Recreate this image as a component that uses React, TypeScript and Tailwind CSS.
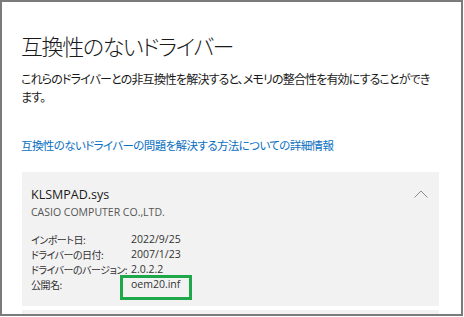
import React from 'react';

// Driver detail rows
const rows: Array<{ label: string; value: string; highlight?: boolean }> = [
  { label: 'インポート日:', value: '2022/9/25' },
  { label: 'ドライバーの日付:', value: '2007/1/23' },
  { label: 'ドライバーのバージョン:', value: '2.0.2.2' },
  { label: '公開名:', value: 'oem20.inf', highlight: true },
];

const ChevronUp = () => (
  <svg width="14" height="8" viewBox="0 0 14 8" fill="none">
    <polyline points="0.5,7.5 7,1 13.5,7.5" stroke="#8c8c8c" strokeWidth="1" />
  </svg>
);

const App: React.FC = () => {
  return (
    <div className="w-[464px] h-[317px] bg-white font-['Open_Sans','Noto_Sans_CJK_JP',sans-serif] [font-feature-settings:'palt']">
      <div className="w-[463px] h-[316px] border-2 border-[#7b7b7b] overflow-hidden pl-[19px] pr-[22px] pt-[28px]">
        <h1 className="text-[22px] leading-[30px] tracking-[-1.4px] text-[#1a1a1a] font-['Noto_Sans_CJK_JP',sans-serif] font-light">
          互換性のないドライバー
        </h1>

        <p className="mt-[10px] text-[12px] leading-[18px] tracking-[-0.85px] text-[#1a1a1a] font-['Noto_Sans_CJK_JP',sans-serif]">
          これらのドライバーとの非互換性を解決すると、メモリの整合性を有効にすることができます。
        </p>

        <a className="block mt-[30px] text-[11.5px] leading-[18px] tracking-[-0.6px] text-[#0a6fc2] font-['Noto_Sans_CJK_JP',sans-serif]">
          互換性のないドライバーの問題を解決する方法についての詳細情報
        </a>

        <div className="mt-[18px] ml-[1px] bg-[#f2f2f2] pl-[9px] pr-[11px] pt-[14px] pb-[14px]">
          <div className="flex items-start justify-between">
            <div>
              <div className="text-[12.5px] leading-[18px] text-[#1a1a1a]">KLSMPAD.sys</div>
              <div className="text-[10.5px] leading-[16px] text-[#555]">CASIO COMPUTER CO.,LTD.</div>
            </div>
            <div className="mt-[4px]">
              <ChevronUp />
            </div>
          </div>

          <div className="mt-[12px] text-[10.5px] leading-[15px] text-[#333]">
            {rows.map((r) => (
              <div key={r.label} className="flex">
                <span className="w-[100px] whitespace-nowrap text-[10px] tracking-[-0.5px] font-['Noto_Sans_CJK_JP',sans-serif]">
                  {r.label}
                </span>
                <span className="relative">
                  {r.value}
                  {r.highlight && (
                    <span className="absolute -left-[11px] -top-[2px] w-[72px] h-[25px] border-[3px] border-[#1fa84a]" />
                  )}
                </span>
              </div>
            ))}
          </div>
        </div>

        <div className="mt-[4px] ml-[1px] h-[20px] bg-[#f2f2f2]" />
      </div>
    </div>
  );
};

export default App;
